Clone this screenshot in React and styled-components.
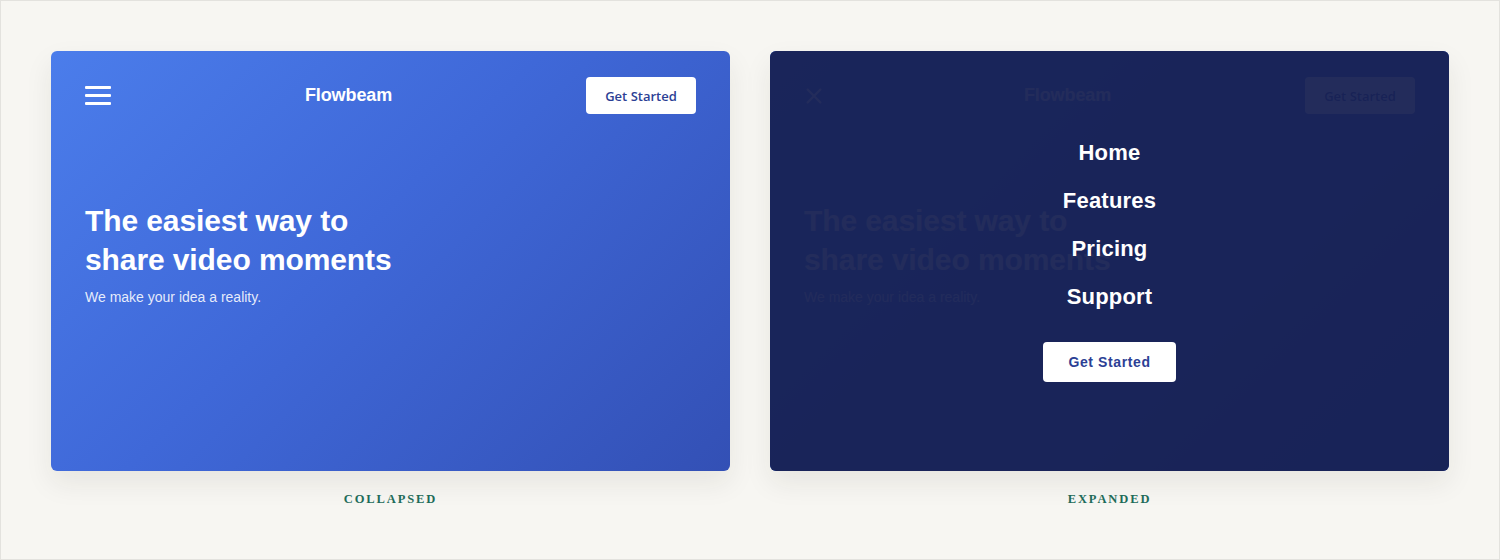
import React from "react"
import styled, { createGlobalStyle } from "styled-components"

const GlobalStyle = createGlobalStyle`
  html, body {
    margin: 0;
    padding: 0;
    background: #f7f6f2;
    font-family: "Liberation Sans", Arial, sans-serif;
  }
  * { box-sizing: border-box; }
`

const links = ["Home", "Features", "Pricing", "Support"]

function Hamburger() {
    return (
        <Burger aria-label="open menu">
            <span />
            <span />
            <span />
        </Burger>
    )
}

function CloseIcon() {
    return (
        <IconButton aria-label="close menu">
            <svg width="22" height="22" viewBox="0 0 24 24" fill="none" stroke="#fff" strokeWidth="2.2" strokeLinecap="round">
                <path d="M5 5l14 14M19 5L5 19" />
            </svg>
        </IconButton>
    )
}

function Hero({ expanded }) {
    return (
        <Card>
            <Header>
                {expanded ? <CloseIcon /> : <Hamburger />}
                <Brand>Flowbeam</Brand>
                <CtaButton>Get Started</CtaButton>
            </Header>
            <HeroText>
                <Headline>The easiest way to<br />share video moments</Headline>
                <Sub>We make your idea a reality.</Sub>
            </HeroText>
            {expanded && (
                <Overlay>
                    <MenuList>
                        {links.map((l) => (
                            <MenuLink key={l}>{l}</MenuLink>
                        ))}
                    </MenuList>
                    <MenuButton>Get Started</MenuButton>
                </Overlay>
            )}
        </Card>
    )
}

export default function App() {
    return (
        <Page>
            <GlobalStyle />
            <Grid>
                <Column>
                    <Hero />
                    <Caption>Collapsed</Caption>
                </Column>
                <Column>
                    <Hero expanded />
                    <Caption>Expanded</Caption>
                </Column>
            </Grid>
        </Page>
    )
}

const Page = styled.div`
    min-height: 100vh;
    border: 1px solid #e3e2de;
    padding: 50px 50px 0;
`

const Grid = styled.div`
    display: grid;
    grid-template-columns: 1fr 1fr;
    column-gap: 40px;
`

const Column = styled.div`
    display: flex;
    flex-direction: column;
    align-items: stretch;
`

const Card = styled.section`
    position: relative;
    height: 420px;
    border-radius: 6px;
    overflow: hidden;
    background: linear-gradient(135deg, #4b7deb 0%, #3f68d8 45%, #3350b5 100%);
    box-shadow: 0 12px 28px rgba(40, 40, 30, 0.08);
    color: #fff;
`

const Header = styled.header`
    display: flex;
    align-items: center;
    justify-content: space-between;
    padding: 26px 34px 0;
    height: 63px;
`

const Burger = styled.button`
    display: flex;
    flex-direction: column;
    justify-content: space-between;
    width: 26px;
    height: 19px;
    padding: 0;
    border: 0;
    background: none;
    span {
        display: block;
        height: 3px;
        border-radius: 1px;
        background: #fff;
    }
`

const IconButton = styled.button`
    display: flex;
    width: 26px;
    padding: 0;
    border: 0;
    background: none;
    svg { margin-left: -1px; }
`

const Brand = styled.div`
    font-size: 18px;
    font-weight: 700;
    letter-spacing: -0.1px;
`

const CtaButton = styled.button`
    width: 110px;
    height: 37px;
    border: 0;
    border-radius: 4px;
    background: #fff;
    color: #2c3f95;
    font-family: "Open Sans", "Noto Sans", sans-serif;
    font-size: 13px;
    font-weight: 600;
`

const HeroText = styled.div`
    padding: 87px 34px 0;
`

const Headline = styled.h1`
    margin: 0;
    font-size: 30px;
    line-height: 39px;
    font-weight: 700;
    letter-spacing: -0.1px;
`

const Sub = styled.p`
    margin: 10px 0 0;
    font-size: 14px;
    color: rgba(255, 255, 255, 0.88);
`

const Overlay = styled.div`
    position: absolute;
    inset: 0;
    background: rgba(23, 33, 82, 0.95);
    display: flex;
    flex-direction: column;
    align-items: center;
    justify-content: center;
`

const MenuList = styled.nav`
    display: flex;
    flex-direction: column;
    align-items: center;
    gap: 22px;
`

const MenuLink = styled.a`
    font-size: 22px;
    line-height: 26px;
    font-weight: 700;
    letter-spacing: 0.2px;
    color: #fff;
`

const MenuButton = styled.button`
    margin-top: 32px;
    width: 133px;
    height: 40px;
    border: 0;
    border-radius: 4px;
    background: #fff;
    color: #2c3f95;
    font-family: "Liberation Sans", Arial, sans-serif;
    font-size: 14px;
    font-weight: 700;
    letter-spacing: 0.6px;
`

const Caption = styled.div`
    margin-top: 21px;
    text-align: center;
    font-family: "Liberation Serif", "Times New Roman", serif;
    font-size: 12.5px;
    font-weight: 700;
    letter-spacing: 1.9px;
    text-transform: uppercase;
    color: #1f6d5b;
`
